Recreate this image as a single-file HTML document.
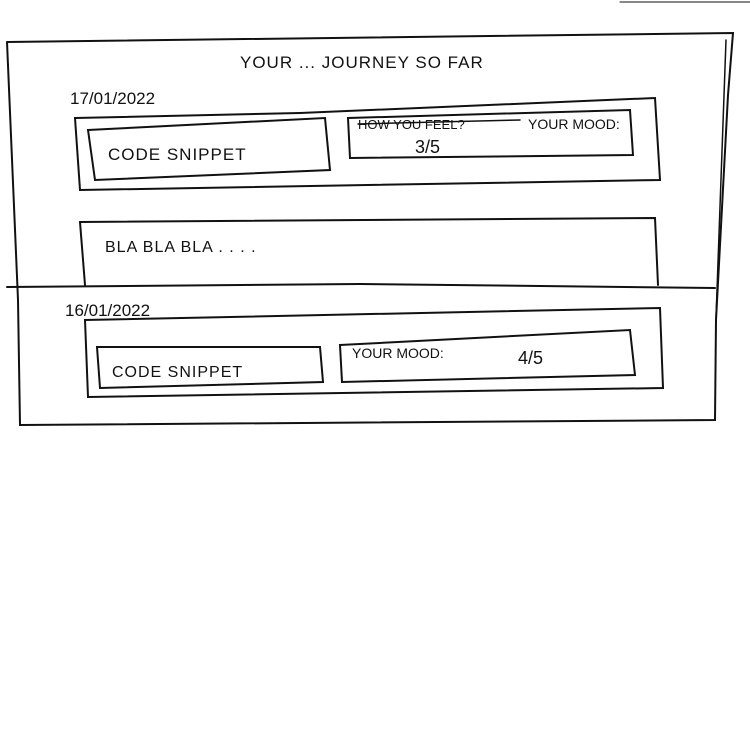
<!DOCTYPE html>
<html><head><meta charset="utf-8"><style>
html,body{margin:0;padding:0;background:#fff;width:750px;height:730px;overflow:hidden}
svg{display:block}
text{font-family:"Liberation Sans",sans-serif;fill:#111}
</style></head><body>
<svg width="750" height="730" viewBox="0 0 750 730" xmlns="http://www.w3.org/2000/svg">
<g fill="none" stroke="#111" stroke-width="2" stroke-linecap="round">
<line x1="620" y1="2" x2="750" y2="2" stroke-width="1"/>
<!-- outer -->
<path d="M7 42 L733 33 L728 95 L716 320 L715 420 L20 425 L18 300 L7 42"/>
<line x1="726" y1="40" x2="716" y2="318" stroke-width="1.5"/>
<path d="M7 287 L360 284 L715 288"/>
<!-- entry 1 -->
<path d="M75 118 L300 113 L655 98 L660 180 L80 190 Z"/>
<path d="M88 130 L325 118 L330 170 L95 180 Z"/>
<path d="M348 118 L630 110 L633 155 L350 158 Z"/>
<path d="M80 222 L655 218 L658 285"/>
<line x1="80" y1="222" x2="85" y2="285"/>
<!-- entry 2 -->
<path d="M85 320 L660 308 L663 388 L88 397 Z"/>
<path d="M97 347 L320 347 L323 382 L100 388 Z"/>
<path d="M340 345 L630 330 L635 375 L342 382 Z"/>
<line x1="358" y1="124" x2="520" y2="120" stroke-width="1.5"/>
</g>
<text x="240" y="68" font-size="17" letter-spacing="1">YOUR ... JOURNEY  SO FAR</text>
<text x="70" y="104" font-size="17">17/01/2022</text>
<text x="108" y="160" font-size="17" letter-spacing="1">CODE   SNIPPET</text>
<text x="358" y="129" font-size="13">HOW YOU FEEL?</text>
<text x="528" y="129" font-size="14">YOUR  MOOD:</text>
<text x="415" y="153" font-size="18">3/5</text>
<text x="105" y="252" font-size="16" letter-spacing="1">BLA   BLA   BLA . . . .</text>
<text x="65" y="316" font-size="17">16/01/2022</text>
<text x="112" y="377" font-size="16" letter-spacing="1">CODE   SNIPPET</text>
<text x="352" y="358" font-size="14">YOUR  MOOD:</text>
<text x="518" y="364" font-size="18">4/5</text>
</svg>
</body></html>
